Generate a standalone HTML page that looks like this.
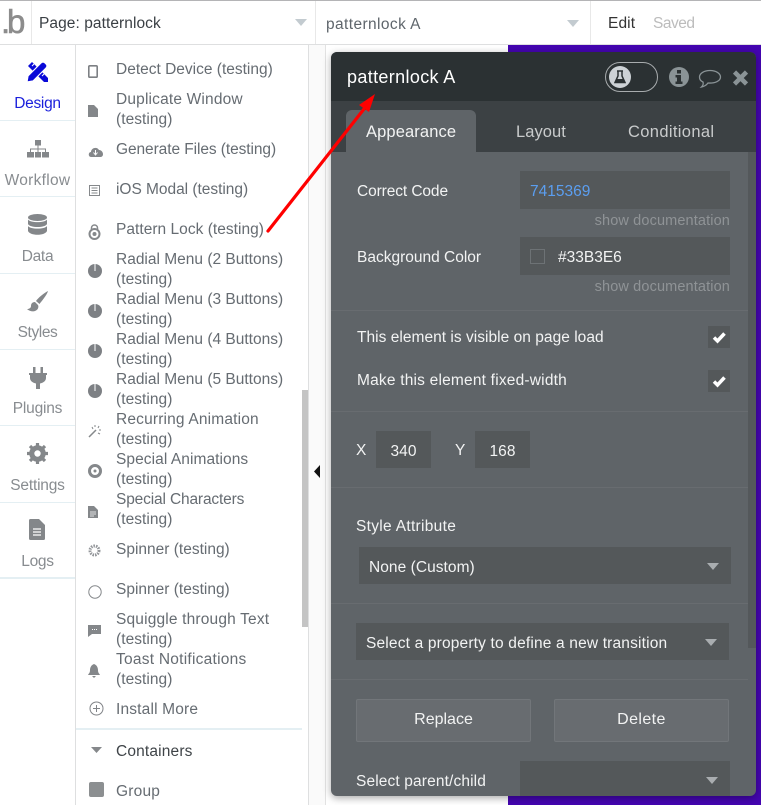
<!DOCTYPE html>
<html><head><meta charset="utf-8">
<style>
html,body{margin:0;padding:0;background:#fff}
#r{position:relative;width:761px;height:805px;overflow:hidden;background:#fff;font-family:"Liberation Sans",sans-serif;font-size:15.5px}
#r div,#r svg{position:absolute}
.t{white-space:nowrap;line-height:20px;height:20px;letter-spacing:.05px;margin-top:1px}
.l{left:116px;color:#666c72}
.n{left:0;width:75px;text-align:center;color:#888c90}
.w{color:#f2f3f3}
.s{background:#54585a}
.h{background:#686c70;height:1px}
.d{color:#8f9396;font-size:14.5px;text-align:right;right:31px;letter-spacing:.13px}
.i{fill:#84878a;stroke:none}
</style></head><body><div id="r">
<!-- top bar -->
<div style="left:0;top:0;width:761px;height:1px;background:#b4b4b6"></div>
<div style="left:0;top:44px;width:761px;height:1px;background:#dedfe0"></div>
<div style="left:31px;top:1px;width:1px;height:43px;background:#e8e8e8"></div>
<div style="left:315px;top:1px;width:1px;height:43px;background:#e8e8e8"></div>
<div style="left:590px;top:1px;width:1px;height:43px;background:#e8e8e8"></div>
<div class="t" style="left:1px;top:4px;margin-top:0;font-size:33px;line-height:36px;height:36px;color:#8c8c8c;letter-spacing:-3.2px;-webkit-text-stroke:.6px #8c8c8c">.b</div>
<div class="t" style="left:39px;top:13px;color:#3a3f44;letter-spacing:.07px">Page: patternlock</div>
<div class="t" style="left:326px;top:14px;color:#5f666c;letter-spacing:.4px">patternlock A</div>
<div class="t" style="left:608px;top:13px;color:#333;letter-spacing:.1px">Edit</div>
<div class="t" style="left:653px;top:13px;color:#bcbcbc;letter-spacing:-.5px">Saved</div>
<svg style="left:295px;top:19px" width="12" height="8"><path d="M0 0H12L6 7Z" fill="#c3cbd0"/></svg>
<svg style="left:567px;top:20px" width="12" height="8"><path d="M0 0H12L6 7Z" fill="#c3cbd0"/></svg>

<!-- canvas -->
<div style="left:75px;top:45px;width:1px;height:760px;background:#dedfe0"></div>
<div style="left:308px;top:45px;width:1px;height:760px;background:#dedfe0"></div>
<div style="left:309px;top:45px;width:16px;height:760px;background:#fafafa"></div>
<div style="left:325px;top:45px;width:1px;height:760px;background:#e2e2e2"></div>
<div style="left:302px;top:390px;width:6px;height:237px;background:#c4c4c4"></div>
<svg style="left:313px;top:465px" width="8" height="13"><path d="M7 0V13L1 6.500Z" fill="#111"/></svg>
<div style="left:508px;top:45px;width:253px;height:760px;background:#4405b0"></div>

<!-- nav -->
<svg style="left:26px;top:61px" width="23" height="22" viewBox="0 0 23 22"><path d="M2 5L6 1L22 17V21H18Z" fill="#0a0ad8"/><path d="M1 21L2 15L15 2Q17 0 19 2L20 3Q22 5 20 7L7 20Z" fill="#0a0ad8" stroke="#fff" stroke-width="1.200"/><path d="M6 5L8 3M16 15L18 13" stroke="#fff" stroke-width="1"/></svg>
<div class="t n" style="top:93px;color:#1a1fdc;letter-spacing:-.3px">Design</div>
<div style="left:0;top:120px;width:75px;height:1px;background:#e4eff3"></div>
<svg style="left:27px;top:140px" width="22" height="18" class="i"><path d="M8 0h6v5.500H8zM0 12h7v5.500H0zM8 12h6v5.500H8zM15 12h7v5.500h-7zM10.500 5h1v3.500H19V12h-1V9.500H11.500V12h-1V9.500H4V12H3V8.500h7.500z"/></svg>
<div class="t n" style="top:170px;letter-spacing:.3px">Workflow</div>
<div style="left:0;top:196px;width:75px;height:1px;background:#e4eff3"></div>
<svg style="left:28px;top:214px" width="19" height="21" class="i"><ellipse cx="9.500" cy="3.500" rx="9.500" ry="3.500"/><path d="M0 5.500c2 3.500 17 3.500 19 0v4.500c-2 4-17 4-19 0zM0 12c2 3.500 17 3.500 19 0v5c-2 5-17 5-19 0z"/></svg>
<div class="t n" style="top:246px;letter-spacing:-.3px">Data</div>
<div style="left:0;top:273px;width:75px;height:1px;background:#e4eff3"></div>
<svg style="left:27px;top:291px" width="22" height="22" class="i"><path d="M21 0C20 4 14 11 12.500 13L9 10C11 7 17 2 21 0ZM8 11C5 11 4 13 4 15C4 17 2 18 0 18C2 20 6 21 8 20C11 19 12 16 11 14Z"/></svg>
<div class="t n" style="top:322px;letter-spacing:-.4px">Styles</div>
<div style="left:0;top:349px;width:75px;height:1px;background:#e4eff3"></div>
<svg style="left:29px;top:367px" width="18" height="22" class="i"><path d="M4 0h2.500v6H4zM11.500 0H14v6h-2.500zM0 6h18v2h-1v3c0 3-3 5-6 5.500V22H7v-5.500C4 16 1 14 1 11V8H0z"/></svg>
<div class="t n" style="top:398px;letter-spacing:-.2px">Plugins</div>
<div style="left:0;top:425px;width:75px;height:1px;background:#e4eff3"></div>
<svg style="left:27px;top:443px" width="21" height="21" viewBox="0 0 21 21"><circle cx="10.500" cy="10.500" r="6" fill="none" stroke="#84878a" stroke-width="4.500"/><path d="M10.500 0v21M0 10.500h21M3 3l15 15M18 3L3 18" stroke="#84878a" stroke-width="3.200"/><circle cx="10.500" cy="10.500" r="3.200" fill="#fff"/></svg>
<div class="t n" style="top:475px;letter-spacing:-.2px">Settings</div>
<div style="left:0;top:502px;width:75px;height:1px;background:#e4eff3"></div>
<svg style="left:29px;top:519px" width="16" height="21"><path d="M0 1.500Q0 0 1.500 0H10L16 6V19.500Q16 21 14.500 21H1.500Q0 21 0 19.500Z" fill="#84878a"/><path d="M4 10H12M4 13H12M4 16H12" stroke="#fff" stroke-width="1.300"/></svg>
<div class="t n" style="top:551px;letter-spacing:-.3px">Logs</div>
<div style="left:0;top:577px;width:75px;height:2px;background:#e4eff3"></div>

<!-- list -->
<div class="t l" style="top:59px;letter-spacing:0">Detect Device (testing)</div>
<div class="t l" style="top:89px;letter-spacing:.17px">Duplicate Window</div><div class="t l" style="top:109px">(testing)</div>
<div class="t l" style="top:139px;letter-spacing:-.08px">Generate Files (testing)</div>
<div class="t l" style="top:179px;letter-spacing:-.03px">iOS Modal (testing)</div>
<div class="t l" style="top:219px;letter-spacing:.03px">Pattern Lock (testing)</div>
<div class="t l" style="top:249px;letter-spacing:0">Radial Menu (2 Buttons)</div><div class="t l" style="top:269px">(testing)</div>
<div class="t l" style="top:289px;letter-spacing:0">Radial Menu (3 Buttons)</div><div class="t l" style="top:309px">(testing)</div>
<div class="t l" style="top:329px;letter-spacing:0">Radial Menu (4 Buttons)</div><div class="t l" style="top:349px">(testing)</div>
<div class="t l" style="top:369px;letter-spacing:0">Radial Menu (5 Buttons)</div><div class="t l" style="top:389px">(testing)</div>
<div class="t l" style="top:409px;letter-spacing:.17px">Recurring Animation</div><div class="t l" style="top:429px">(testing)</div>
<div class="t l" style="top:449px;letter-spacing:.07px">Special Animations</div><div class="t l" style="top:469px">(testing)</div>
<div class="t l" style="top:489px;letter-spacing:-.15px">Special Characters</div><div class="t l" style="top:509px">(testing)</div>
<div class="t l" style="top:539px;letter-spacing:0">Spinner (testing)</div>
<div class="t l" style="top:579px;letter-spacing:0">Spinner (testing)</div>
<div class="t l" style="top:609px;letter-spacing:.17px">Squiggle through Text</div><div class="t l" style="top:629px">(testing)</div>
<div class="t l" style="top:649px;letter-spacing:.25px">Toast Notifications</div><div class="t l" style="top:669px">(testing)</div>
<div class="t l" style="top:699px;letter-spacing:.17px">Install More</div>
<div style="left:76px;top:728px;width:226px;height:2px;background:#e4eff3"></div>
<div class="t" style="left:116px;top:741px;color:#3f4448;letter-spacing:.16px">Containers</div>
<div class="t l" style="top:781px;letter-spacing:.2px">Group</div>

<!-- list icons -->
<svg style="left:88px;top:65px" width="10" height="13"><rect x=".8" y=".8" width="8.400" height="11.400" rx="1" fill="none" stroke="#7d8084" stroke-width="1.600"/></svg>
<svg style="left:88px;top:105px" width="10" height="12" class="i"><path d="M0 0H6L10 4V12H0Z"/></svg>
<svg style="left:88px;top:146px" width="15" height="11" class="i"><path d="M3 11C0 11 0 6 3 6C3 2 9 0 11 4C14 4 15 7 15 8C15 10 14 11 12 11Z"/><path d="M7.500 4V8M5.500 6.500L7.500 9L9.500 6.500" stroke="#fff" fill="none"/></svg>
<svg style="left:89px;top:185px" width="11" height="11"><path d="M.500.500H10.500V10.500H.500ZM2.500 3H8.500M2.500 5.500H8.500M2.500 8H8.500" fill="none" stroke="#85888b"/></svg>
<svg style="left:88px;top:224px" width="13" height="16"><path d="M3.500 6V4C3.500 0 9.500 0 9.500 4V6" fill="none" stroke="#85888b" stroke-width="1.500"/><circle cx="6.500" cy="10" r="5" fill="none" stroke="#85888b" stroke-width="2"/><circle cx="6.500" cy="10" r="2" fill="#85888b"/></svg>
<svg style="left:88px;top:264px" width="14" height="14"><circle cx="7" cy="7" r="7" fill="#7d8084"/><path d="M7 0V7" stroke="#fff" stroke-width="1"/></svg>
<svg style="left:88px;top:304px" width="14" height="14"><circle cx="7" cy="7" r="7" fill="#7d8084"/><path d="M7 0V7" stroke="#fff" stroke-width="1"/></svg>
<svg style="left:88px;top:344px" width="14" height="14"><circle cx="7" cy="7" r="7" fill="#7d8084"/><path d="M7 0V7" stroke="#fff" stroke-width="1"/></svg>
<svg style="left:88px;top:384px" width="14" height="14"><circle cx="7" cy="7" r="7" fill="#7d8084"/><path d="M7 0V7" stroke="#fff" stroke-width="1"/></svg>
<svg style="left:88px;top:424px" width="15" height="14"><path d="M1 13L8 6" stroke="#85888b" stroke-width="1.500"/><path d="M7 1V3M11 2L10 4M13 6H11M12 10L10 9M4 3L5 5" stroke="#85888b"/></svg>
<svg style="left:88px;top:464px" width="14" height="14"><circle cx="7" cy="7" r="5.500" fill="none" stroke="#85888b" stroke-width="3"/><circle cx="7" cy="7" r="1.500" fill="#85888b"/></svg>
<svg style="left:88px;top:506px" width="10" height="12" class="i"><path d="M0 0H6L10 4V12H0Z"/><path d="M2 6H8M2 8H8M2 10H6" stroke="#fff" stroke-width=".8"/></svg>
<svg style="left:88px;top:544px" width="13" height="13"><circle cx="6.500" cy="6.500" r="4.500" fill="none" stroke="#93969a" stroke-width="3" stroke-dasharray="1.500 1"/></svg>
<svg style="left:88px;top:585px" width="14" height="14"><circle cx="7" cy="7" r="6.200" fill="none" stroke="#85888b" stroke-width="1"/></svg>
<svg style="left:88px;top:625px" width="13" height="12" class="i"><path d="M0 0H13V9H4L0 12Z"/><path d="M4 4.500H9" stroke="#fff" stroke-dasharray="1 1"/></svg>
<svg style="left:88px;top:664px" width="12" height="14" class="i"><path d="M6 0C9 1 10 4 10 6C10 9 11 9 12 11H0C1 9 2 9 2 6C2 4 3 1 6 0ZM4 12H8L6 14Z"/></svg>
<svg style="left:89px;top:701px" width="15" height="15"><circle cx="7.500" cy="7.500" r="6.500" fill="none" stroke="#808387"/><path d="M7.500 4V11M4 7.500H11" stroke="#808387"/></svg>
<svg style="left:91px;top:747px" width="11" height="7"><path d="M0 0H11L5.500 6Z" fill="#85888b"/></svg>
<div style="left:89px;top:782px;width:15px;height:15px;background:#8c8f91;border-radius:2px"></div>

<!-- panel -->
<div style="left:331px;top:52px;width:425px;height:744px;background:#5f6468;border-radius:6px;overflow:hidden;box-shadow:0 2px 8px rgba(0,0,0,.35)">
 <div style="left:0;top:0;width:425px;height:49px;background:#2b3133"></div>
 <div style="left:0;top:49px;width:425px;height:51px;background:#3c4144"></div>
 <div style="left:15px;top:58px;width:130px;height:42px;background:#5f6468;border-radius:6px 6px 0 0"></div>
 <div style="left:417px;top:100px;width:8px;height:496px;background:#54585b"></div>
</div>
<div class="t" style="left:347px;top:66px;color:#fff;font-size:18px;letter-spacing:.35px">patternlock A</div>
<div class="t w" style="left:366px;top:121px;font-size:16.500px;letter-spacing:.12px">Appearance</div>
<div class="t" style="left:516px;top:121px;font-size:16.500px;color:#c9cbcc;letter-spacing:.05px">Layout</div>
<div class="t" style="left:628px;top:121px;font-size:16.500px;color:#c9cbcc;letter-spacing:.35px">Conditional</div>

<div style="left:605px;top:62px;width:51px;height:28px;border:1px solid #a8acae;border-radius:15px"></div>
<div style="left:609px;top:66px;width:22px;height:22px;border-radius:50%;background:#cdd2d6"></div>
<svg style="left:614px;top:70px" width="12" height="14"><path d="M4 1V6L1 12.500H11L8 6V1M3 1H9" fill="none" stroke="#2b3133" stroke-width="1.500"/><path d="M3 9H9L11 13H1Z" fill="#2b3133"/></svg>
<svg style="left:669px;top:67px" width="20" height="20"><circle cx="10" cy="10" r="10" fill="#8a9396"/><rect x="8" y="3" width="4" height="3.500" fill="#2b3133"/><path d="M6.500 8H12V14.500H13.500V17H6.500V14.500H8V10.500H6.500Z" fill="#2b3133"/></svg>
<svg style="left:698px;top:69px" width="24" height="20"><path d="M12 1.500C18 1.500 22.500 4.500 22.500 8C22.500 12 17 14.500 10 14C8.500 16 6 17.500 3.500 18C5 16.500 5.500 14.500 5 13C2.500 12 1.500 10 1.500 8C1.500 4.500 6 1.500 12 1.500Z" fill="none" stroke="#8a9396" stroke-width="1.300"/></svg>
<svg style="left:732px;top:70px" width="17" height="16"><path d="M2.500 2L14.500 14M14.500 2L2.500 14" stroke="#8a9396" stroke-width="4.500"/></svg>

<!-- rows -->
<div class="t w" style="left:357px;top:181px;letter-spacing:-.1px">Correct Code</div>
<div class="s" style="left:520px;top:171px;width:210px;height:38px"></div>
<div class="t" style="left:530px;top:181px;color:#5b9ef0;letter-spacing:0">7415369</div>
<div class="t d" style="top:210px">show documentation</div>
<div class="t w" style="left:357px;top:247px;letter-spacing:0">Background Color</div>
<div class="s" style="left:520px;top:237px;width:210px;height:38px"></div>
<div style="left:530px;top:249px;width:13px;height:13px;border:1px solid #6d7275"></div>
<div class="t w" style="left:558px;top:247px;letter-spacing:0">#33B3E6</div>
<div class="t d" style="top:276px">show documentation</div>
<div class="h" style="left:331px;top:310px;width:417px"></div>
<div class="t w" style="left:357px;top:327px;letter-spacing:.03px">This element is visible on page load</div>
<div class="s" style="left:708px;top:326px;width:22px;height:22px"></div>
<svg style="left:712px;top:331px" width="15" height="13"><path d="M2 6.500L5.500 10L12.500 2.500" fill="none" stroke="#fff" stroke-width="3.500"/></svg>
<div class="t w" style="left:357px;top:370px;letter-spacing:.2px">Make this element fixed-width</div>
<div class="s" style="left:708px;top:370px;width:22px;height:22px"></div>
<svg style="left:712px;top:375px" width="15" height="13"><path d="M2 6.500L5.500 10L12.500 2.500" fill="none" stroke="#fff" stroke-width="3.500"/></svg>
<div class="h" style="left:331px;top:411px;width:417px"></div>
<div class="t w" style="left:356px;top:440px">X</div>
<div class="s" style="left:376px;top:431px;width:55px;height:37px"></div>
<div class="t w" style="left:376px;width:55px;text-align:center;top:441px">340</div>
<div class="t w" style="left:455px;top:440px">Y</div>
<div class="s" style="left:475px;top:431px;width:55px;height:37px"></div>
<div class="t w" style="left:475px;width:55px;text-align:center;top:441px">168</div>
<div class="h" style="left:331px;top:487px;width:417px"></div>
<div class="t w" style="left:356px;top:516px;letter-spacing:.3px">Style Attribute</div>
<div class="s" style="left:359px;top:547px;width:372px;height:37px"></div>
<div class="t w" style="left:369px;top:557px">None (Custom)</div>
<svg style="left:707px;top:563px" width="12" height="7"><path d="M0 0H12L6 7Z" fill="#a9adb0"/></svg>
<div class="h" style="left:331px;top:603px;width:417px"></div>
<div class="s" style="left:356px;top:623px;width:373px;height:37px"></div>
<div class="t w" style="left:366px;top:633px;letter-spacing:.17px">Select a property to define a new transition</div>
<svg style="left:705px;top:639px" width="12" height="7"><path d="M0 0H12L6 7Z" fill="#a9adb0"/></svg>
<div class="h" style="left:331px;top:679px;width:417px"></div>
<div style="left:356px;top:699px;width:173px;height:41px;background:#686c70;border:1px solid #72767a;border-radius:2px"></div>
<div class="t w" style="left:356px;width:175px;text-align:center;top:709px;font-size:16px;letter-spacing:0">Replace</div>
<div style="left:554px;top:699px;width:173px;height:41px;background:#686c70;border:1px solid #72767a;border-radius:2px"></div>
<div class="t w" style="left:554px;width:175px;text-align:center;top:709px;font-size:16px;letter-spacing:.4px">Delete</div>
<div class="t w" style="left:356px;top:771px;letter-spacing:.13px">Select parent/child</div>
<div class="s" style="left:520px;top:761px;width:210px;height:35px"></div>
<svg style="left:706px;top:777px" width="12" height="7"><path d="M0 0H12L6 7Z" fill="#a9adb0"/></svg>

<!-- annotation arrow -->
<svg style="left:260px;top:85px" width="125" height="155"><path d="M8 146L104 24" stroke="#f00" stroke-width="3.200" stroke-linecap="round"/><path d="M115 9L99 20L109 27Z" fill="#f00"/></svg>
</div></body></html>
